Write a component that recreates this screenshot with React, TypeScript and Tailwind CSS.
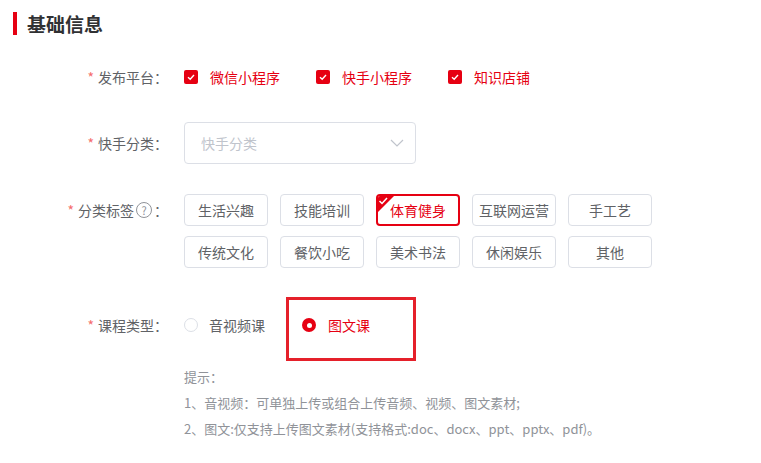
import React from "react";

const RED = "#e60012";

function Check({ label }: { label: string }) {
  return (
    <div className="flex items-center">
      <span className="w-[14px] h-[14px] rounded-[2px] bg-[#e60012] flex items-center justify-center">
        <svg width="10" height="10" viewBox="0 0 10 10">
          <polyline points="2,5.2 4.2,7.2 8,3" fill="none" stroke="white" strokeWidth="1.4" />
        </svg>
      </span>
      <span className="ml-[12px] text-[14px] text-[#e60012] leading-[20px]">{label}</span>
    </div>
  );
}

function Label({ text, q }: { text: string; q?: boolean }) {
  return (
    <div className="w-[168px] flex justify-end items-center text-[14px] text-[#606266] leading-[20px]">
      <span className="text-[#f56c6c] mr-[4px]">*</span>
      <span>{text}</span>
      {q && (
        <span className="ml-[2px] mr-[2px] w-[16px] h-[16px] rounded-full border border-[#909399] flex items-center justify-center text-[11px] text-[#909399] leading-none">
          ?
        </span>
      )}
      <span className="w-[14px]">：</span>
    </div>
  );
}

function Tag({ text, active }: { text: string; active?: boolean }) {
  if (active) {
    return (
      <div className="relative w-[84px] h-[32px] rounded-[4px] border-2 border-[#e60012] flex items-center justify-center text-[14px] text-[#e60012] overflow-hidden">
        <svg className="absolute left-0 top-0" width="16" height="16" viewBox="0 0 16 16">
          <polygon points="0,0 16,0 0,16" fill={RED} />
          <polyline points="1.5,5 4,7.5 9,2" fill="none" stroke="white" strokeWidth="1.5" />
        </svg>
        {text}
      </div>
    );
  }
  return (
    <div className="w-[84px] h-[32px] rounded-[4px] border border-[#dcdfe6] flex items-center justify-center text-[14px] text-[#606266]">
      {text}
    </div>
  );
}

export default function App() {
  return (
    <div className="w-[761px] h-[463px] bg-white overflow-hidden font-['Noto_Sans_CJK_SC',sans-serif]">
      <div className="flex items-center h-[23px] mt-[12px] pl-[13px]">
        <div className="w-[4px] h-[23px] bg-[#e60012]" />
        <span className="ml-[10px] text-[19px] font-bold text-[#303133] leading-[23px]">基础信息</span>
      </div>

      <div className="flex items-center h-[40px] mt-[22px]">
        <Label text="发布平台" />
        <div className="ml-[16px] flex items-center gap-[36px]">
          <Check label="微信小程序" />
          <Check label="快手小程序" />
          <Check label="知识店铺" />
        </div>
      </div>

      <div className="flex items-center h-[42px] mt-[25px]">
        <Label text="快手分类" />
        <div className="ml-[16px] w-[232px] h-[42px] rounded-[4px] border border-[#dcdfe6] flex items-center justify-between pl-[16px] pr-[11px]">
          <span className="text-[14px] text-[#c0c4cc]">快手分类</span>
          <svg width="14" height="8" viewBox="0 0 14 8">
            <polyline points="1,1 7,7 13,1" fill="none" stroke="#c0c4cc" strokeWidth="1.2" />
          </svg>
        </div>
      </div>

      <div className="flex items-start mt-[30px]">
        <div className="h-[32px] flex items-center">
          <Label text="分类标签" q />
        </div>
        <div className="ml-[16px] flex flex-col gap-[10px]">
          <div className="flex gap-[12px]">
            <Tag text="生活兴趣" />
            <Tag text="技能培训" />
            <Tag text="体育健身" active />
            <Tag text="互联网运营" />
            <Tag text="手工艺" />
          </div>
          <div className="flex gap-[12px]">
            <Tag text="传统文化" />
            <Tag text="餐饮小吃" />
            <Tag text="美术书法" />
            <Tag text="休闲娱乐" />
            <Tag text="其他" />
          </div>
        </div>
      </div>

      <div className="flex items-start mt-[29px]">
        <div className="mt-[18px]">
          <Label text="课程类型" />
        </div>
        <div className="ml-[16px] mt-[18px] flex items-center h-[20px]">
          <span className="w-[14px] h-[14px] rounded-full border border-[#dcdfe6]" />
          <span className="ml-[11px] text-[14px] text-[#606266]">音视频课</span>
        </div>
        <div className="ml-[21px] w-[130px] h-[64px] border-[3px] border-[#e5202a] pl-[13px] pt-[15px]">
          <div className="flex items-center h-[20px]">
            <span className="w-[14px] h-[14px] rounded-full bg-[#e60012] flex items-center justify-center">
              <span className="w-[5px] h-[5px] rounded-full bg-white" />
            </span>
            <span className="ml-[12px] text-[14px] text-[#e60012]">图文课</span>
          </div>
        </div>
      </div>

      <div className="mt-[3px] ml-[184px] text-[13px] leading-[26px] text-[#909399]">
        <div>提示：</div>
        <div>1、音视频：可单独上传或组合上传音频、视频、图文素材;</div>
        <div>2、图文:仅支持上传图文素材(支持格式:doc、docx、ppt、pptx、pdf)。</div>
      </div>
    </div>
  );
}
